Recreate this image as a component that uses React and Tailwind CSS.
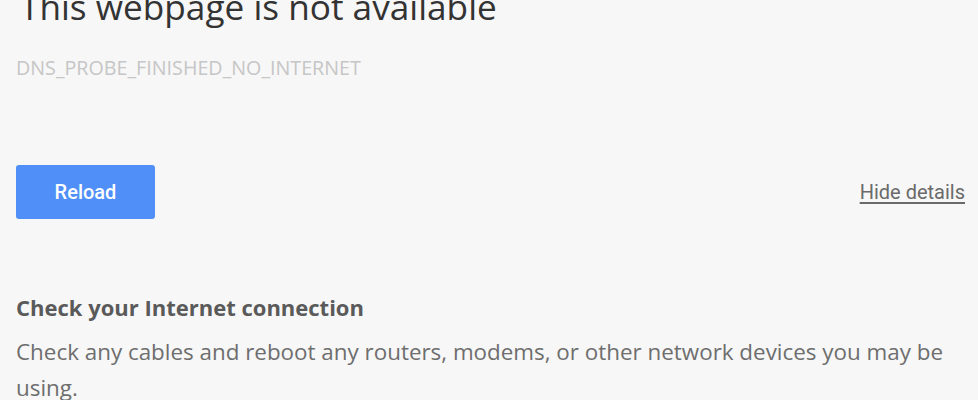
export default function App() {
  return (
    <div className="min-h-[400px] overflow-hidden bg-[#f7f7f7] pl-4 pr-[13px] font-['Open_Sans',sans-serif]">
      {/* Title (scrolled partly off the top) */}
      <h1 className="-mt-[15px] pl-[4px] text-[35.2px] leading-[42px] font-normal text-[#333333] whitespace-nowrap">
        This webpage is not available
      </h1>
      <p className="mt-[29px] text-[19.7px] leading-[24px] text-[#c6c6c6]">
        DNS_PROBE_FINISHED_NO_INTERNET
      </p>

      {/* Actions */}
      <div className="mt-[85px] flex items-center justify-between">
        <button className="h-[54px] w-[139px] rounded-[3px] bg-[#4f8ff7] font-['Roboto',sans-serif] text-[20px] leading-[24px] font-medium text-white">
          Reload
        </button>
        <a className="font-['Roboto',sans-serif] text-[20px] leading-[24px] text-[#6a6a6a] underline underline-offset-[3px]">
          Hide details
        </a>
      </div>

      {/* Details */}
      <h2 className="mt-[74px] text-[22px] leading-[28px] font-bold text-[#5a5a5a]">
        Check your Internet connection
      </h2>
      <p className="mt-[13px] text-[22.4px] leading-[36px] text-[#6e6e6e]">
        Check any cables and reboot any routers, modems, or other network devices you may be using.
      </p>
    </div>
  );
}
